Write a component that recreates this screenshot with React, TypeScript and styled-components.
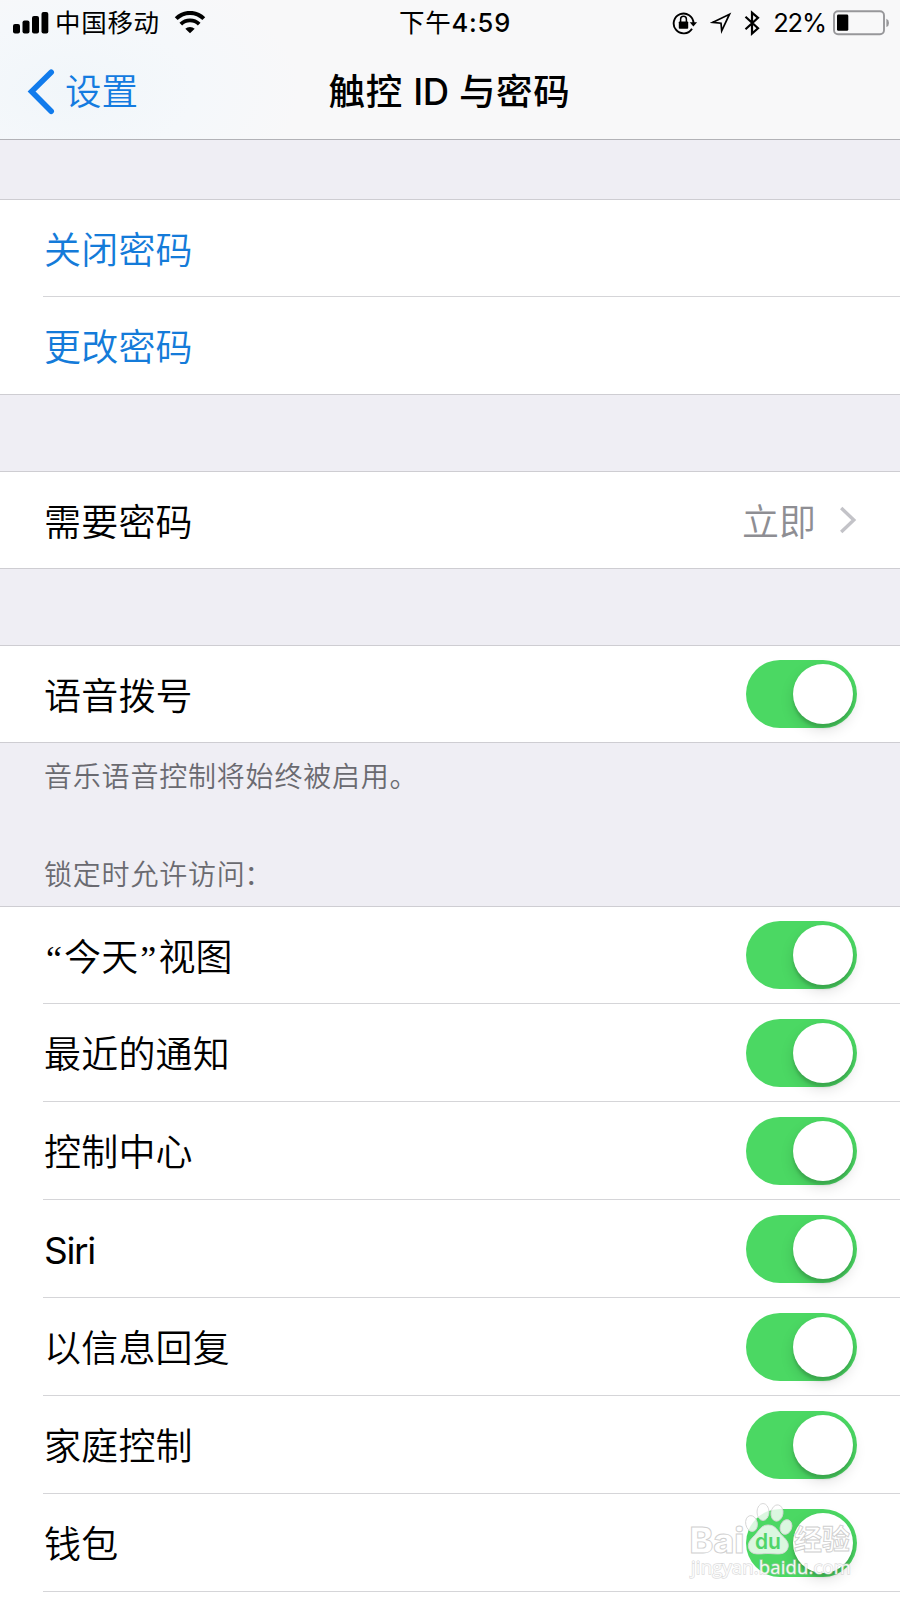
import React from "react";
import styled, { createGlobalStyle } from "styled-components";

const GlobalStyle = createGlobalStyle`
  * { box-sizing: border-box; }
  html, body { margin: 0; padding: 0; background: #efeef4; }
  body { font-family: Inter, "Noto Sans CJK SC", sans-serif; color: #000; }
`;

const Screen = styled.main`
  position: relative;
  width: 900px;
  height: 1600px;
  overflow: hidden;
  background: #efeef4;
`;

const Header = styled.header`
  height: 140px;
  background: radial-gradient(ellipse 230px 130px at 70px 90px, #f1f6fa 0%, #f5f8fb 55%, #f8f8f9 100%);
  border-bottom: 1px solid #b2b2b7;
`;

const StatusBar = styled.div`
  display: grid;
  grid-template-columns: 1fr auto 1fr;
  align-items: center;
  height: 45px;
  padding: 0 10px 0 13px;
  font-size: 25.5px;
  line-height: 44px;
`;

const StatusSide = styled.div<{ $end?: boolean }>`
  display: flex;
  align-items: center;
  height: 44px;
  justify-content: ${(p) => (p.$end ? "flex-end" : "flex-start")};
  svg { display: block; flex: none; }
`;

const StatusIcons = styled.span`
  display: flex;
  align-items: center;
  gap: 12px;
`;

const Carrier = styled.span`
  margin: 0 14px 0 6px;
  padding-top: 1px;
  font-weight: 400;
  letter-spacing: 0.7px;
`;

const Clock = styled.time`
  font-weight: 500;
  letter-spacing: 0.8px;
  margin-left: 7px;
`;

const Meridiem = styled.span`
  font-weight: 400;
`;

const Percent = styled.span`
  margin: 0 7px 0 12px;
  letter-spacing: -1.1px;
`;

const NavBar = styled.nav`
  display: grid;
  grid-template-columns: 1fr auto 1fr;
  align-items: center;
  height: 94px;
`;

const BackButton = styled.a`
  display: flex;
  align-items: center;
  gap: 10px;
  padding-left: 27px;
  color: #147be0;
  font-size: 36.5px;
  font-weight: 350;
  line-height: 50px;
  svg { display: block; }
`;

const Title = styled.h1`
  margin: 0 1px 0 0;
  font-size: 36.5px;
  font-weight: 500;
  line-height: 50px;
  letter-spacing: 0.7px;
`;

const Latin = styled.span`
  font-weight: 550;
  letter-spacing: -0.6px;
`;

const Group = styled.section<{ $gap: number }>`
  margin-top: ${(p) => p.$gap}px;
  background: #fff;
  border-top: 1px solid #cecdd2;
  border-bottom: 1px solid #cecdd2;
  &:last-of-type { border-bottom: 0; }
`;

const Row = styled.div<{ $tall?: boolean }>`
  display: flex;
  align-items: center;
  justify-content: space-between;
  height: ${(p) => (p.$tall ? 98 : 96)}px;
  margin-left: 43px;
  padding: 0 43px 0 1px;
  & + & { border-top: 1px solid #d5d5d8; }
`;

const Label = styled.span<{ $link?: boolean; $latin?: boolean }>`
  font-size: 37px;
  font-weight: ${(p) => (p.$latin ? 400 : 350)};
  line-height: 54px;
  letter-spacing: ${(p) => (p.$latin ? -1.3 : 0.2)}px;
  padding-top: ${(p) => (p.$latin ? 4 : 5)}px;
  color: ${(p) => (p.$link ? "#147bd9" : "#000")};
`;

const Quote = styled.span`
  display: inline-block;
  width: 20px;
  font-family: "Liberation Serif", serif;
  font-size: 36px;
  line-height: 40px;
  text-align: center;
`;

const Value = styled.span`
  display: flex;
  align-items: center;
  gap: 23px;
  padding: 5px 0 0 0;
  font-size: 37px;
  font-weight: 350;
  line-height: 54px;
  color: #8e8e93;
  svg { margin-top: -5px; }
`;

const Track = styled.span`
  display: flex;
  justify-content: flex-end;
  width: 111px;
  height: 68px;
  padding: 4px;
  border-radius: 34px;
  background: #4bd863;
`;

const Knob = styled.span`
  width: 60px;
  height: 60px;
  border-radius: 50%;
  background: #fff;
  box-shadow: 0 6px 14px rgba(0, 0, 0, 0.13), 0 4px 3px rgba(0, 0, 0, 0.14);
`;

const Note = styled.p<{ $top: number; $height: number }>`
  margin: 0;
  height: ${(p) => p.$height}px;
  padding: ${(p) => p.$top}px 0 0 44px;
  font-size: 28px;
  font-weight: 350;
  line-height: 40px;
  letter-spacing: 0.8px;
  color: #6a6a70;
`;

const Tight = styled.span`
  letter-spacing: -0.5px;
`;

const Watermark = styled.svg`
  position: absolute;
  left: 684px;
  top: 1498px;
`;

const Signal = () => (
  <svg width="36" height="24" viewBox="0 0 36 24">
    <rect x="0" y="13" width="7" height="9.5" rx="2" />
    <rect x="9.5" y="9.5" width="7" height="13" rx="2" />
    <rect x="19" y="5" width="7" height="17.5" rx="2" />
    <rect x="28.5" y="1" width="6.8" height="21.5" rx="2" />
  </svg>
);

const Wifi = () => (
  <svg width="32" height="24" viewBox="0 0 32 24">
    <path d="M2.2 7.6a19.5 19.5 0 0 1 27.6 0" fill="none" stroke="#000" strokeWidth="4" />
    <path d="M6.8 13.2a13 13 0 0 1 18.4 0" fill="none" stroke="#000" strokeWidth="3.8" />
    <path d="M11.3 17.8a6.8 6.8 0 0 1 9.4 0L16 22.2Z" />
  </svg>
);

const RotationLock = () => (
  <svg width="26" height="24" viewBox="0 0 26 24" fill="none" stroke="#000">
    <path d="M20 17.7a9.9 9.9 0 1 1 1.5-5.5" strokeWidth="1.9" />
    <path d="M17.7 11.2h7.4l-3.7 4.2Z" fill="#000" stroke="none" />
    <rect x="6.8" y="10.5" width="9.4" height="7.2" rx="0.8" fill="#000" stroke="none" />
    <path d="M8.6 11V8.2a2.9 2.9 0 0 1 5.8 0V11" strokeWidth="1.5" />
  </svg>
);

const Location = () => (
  <svg width="22" height="22" viewBox="0 0 22 22" fill="none" stroke="#000" strokeWidth="1.7">
    <path d="M2.5 10.4 19.5 2.2 11.7 18.8 11 11.2Z" />
  </svg>
);

const Bluetooth = () => (
  <svg width="17" height="26" viewBox="0 0 17 26" fill="none" stroke="#000" strokeWidth="2.2">
    <path d="M1.5 6.7 14 18.3 8 23.5V2.6l6 5.2L1.5 19.3" />
  </svg>
);

const Battery = () => (
  <svg width="57" height="26" viewBox="0 0 57 26">
    <rect x="1" y="1.2" width="50" height="23" rx="4" fill="none" stroke="#97979a" strokeWidth="1.9" />
    <rect x="4" y="4.6" width="11.3" height="16.2" rx="1.4" />
    <path d="M53.4 8.7q2.6 1 2.6 4.2t-2.6 4.2Z" fill="#97979a" />
  </svg>
);

const Switch = () => (
  <Track role="switch" aria-checked="true">
    <Knob />
  </Track>
);

const access: { key: string; label: React.ReactNode; latin?: boolean }[] = [
  { key: "today", label: <><Quote>“</Quote>今天<Quote>”</Quote>视图</> },
  { key: "recent", label: "最近的通知" },
  { key: "control", label: "控制中心" },
  { key: "siri", label: "Siri", latin: true },
  { key: "reply", label: "以信息回复" },
  { key: "home", label: "家庭控制" },
  { key: "wallet", label: "钱包" },
];

export default function App() {
  return (
    <Screen>
      <GlobalStyle />
      <Header>
        <StatusBar>
          <StatusSide>
            <Signal />
            <Carrier>中国移动</Carrier>
            <Wifi />
          </StatusSide>
          <Clock><Meridiem>下午</Meridiem>4:59</Clock>
          <StatusSide $end>
            <StatusIcons>
              <RotationLock />
              <Location />
              <Bluetooth />
            </StatusIcons>
            <Percent>22%</Percent>
            <Battery />
          </StatusSide>
        </StatusBar>
        <NavBar>
          <BackButton>
            <svg width="28" height="46" viewBox="0 0 28 46" fill="none" stroke="#117bec" strokeWidth="5.6" strokeLinecap="round" strokeLinejoin="miter">
              <path d="M24.2 3.2 4.6 22.6l19.6 19.6" />
            </svg>
            设置
          </BackButton>
          <Title>触控 <Latin>ID</Latin> 与密码</Title>
        </NavBar>
      </Header>

      <Group $gap={59}>
        <Row><Label $link>关闭密码</Label></Row>
        <Row $tall><Label $link>更改密码</Label></Row>
      </Group>

      <Group $gap={76}>
        <Row>
          <Label>需要密码</Label>
          <Value>
            立即
            <svg width="18" height="28" viewBox="0 0 18 28" fill="none" stroke="#c3c3c8" strokeWidth="3.4">
              <path d="M2.2 2 14.8 14 2.2 26" />
            </svg>
          </Value>
        </Row>
      </Group>

      <Group $gap={76}>
        <Row><Label>语音拨号</Label><Switch /></Row>
      </Group>
      <Note $top={14} $height={98}>音乐语音控制将始终被启用。</Note>
      <Note $top={14} $height={65}>锁定时允许访<Tight>问</Tight>：</Note>

      <Group $gap={0}>
        {access.map((item, i) => (
          <Row key={item.key} $tall={i > 0}>
            <Label $latin={item.latin}>{item.label}</Label>
            <Switch />
          </Row>
        ))}
        <Row $tall />
      </Group>

      <Watermark width="180" height="90" viewBox="0 0 180 90">
        <g fill="#fff" fillOpacity="0.8" stroke="#d5d5d5" strokeWidth="0.9">
          <ellipse cx="67.5" cy="25.5" rx="5.8" ry="8" transform="rotate(-12 67.5 25.5)" />
          <ellipse cx="79" cy="14" rx="6" ry="8.5" />
          <ellipse cx="93" cy="15" rx="6" ry="8.2" transform="rotate(8 93 15)" />
          <ellipse cx="102" cy="29" rx="5.7" ry="7.5" transform="rotate(18 102 29)" />
          <path d="M84 27c8 0 9.5 6 14 10.5 6 5.5 7.5 9 5.5 13.5-3 7-12 4.5-19.500 4.500s-16.500 2.500-19-4.500c-2-5.500 1-9 5.500-13.500C75 33 77 27 84 27Z" />
        </g>
        <g fontFamily="Inter, 'Noto Sans CJK SC', sans-serif" fontWeight="700">
          <text x="5.5" y="54.5" fontSize="35" fontWeight="800" textLength="55" lengthAdjust="spacingAndGlyphs" fill="#fff" stroke="#d0d0d0" strokeWidth="0.9">Bai</text>
          <text x="71" y="51" fontSize="22" fontWeight="600" textLength="26" lengthAdjust="spacingAndGlyphs" fill="#50d569">du</text>
          <text x="110" y="52" fontSize="28" textLength="56" lengthAdjust="spacingAndGlyphs" fill="#fff" fillOpacity="0.85" stroke="#cfcfcf" strokeWidth="0.9">经验</text>
        </g>
        <text x="7" y="76" fontFamily="'Open Sans', sans-serif" fontSize="18.5" textLength="160" fill="#fff" fillOpacity="0.9" stroke="#c6c6c6" strokeWidth="1.4" strokeOpacity="0.6" paintOrder="stroke">jingyan.baidu.com</text>
      </Watermark>
    </Screen>
  );
}
